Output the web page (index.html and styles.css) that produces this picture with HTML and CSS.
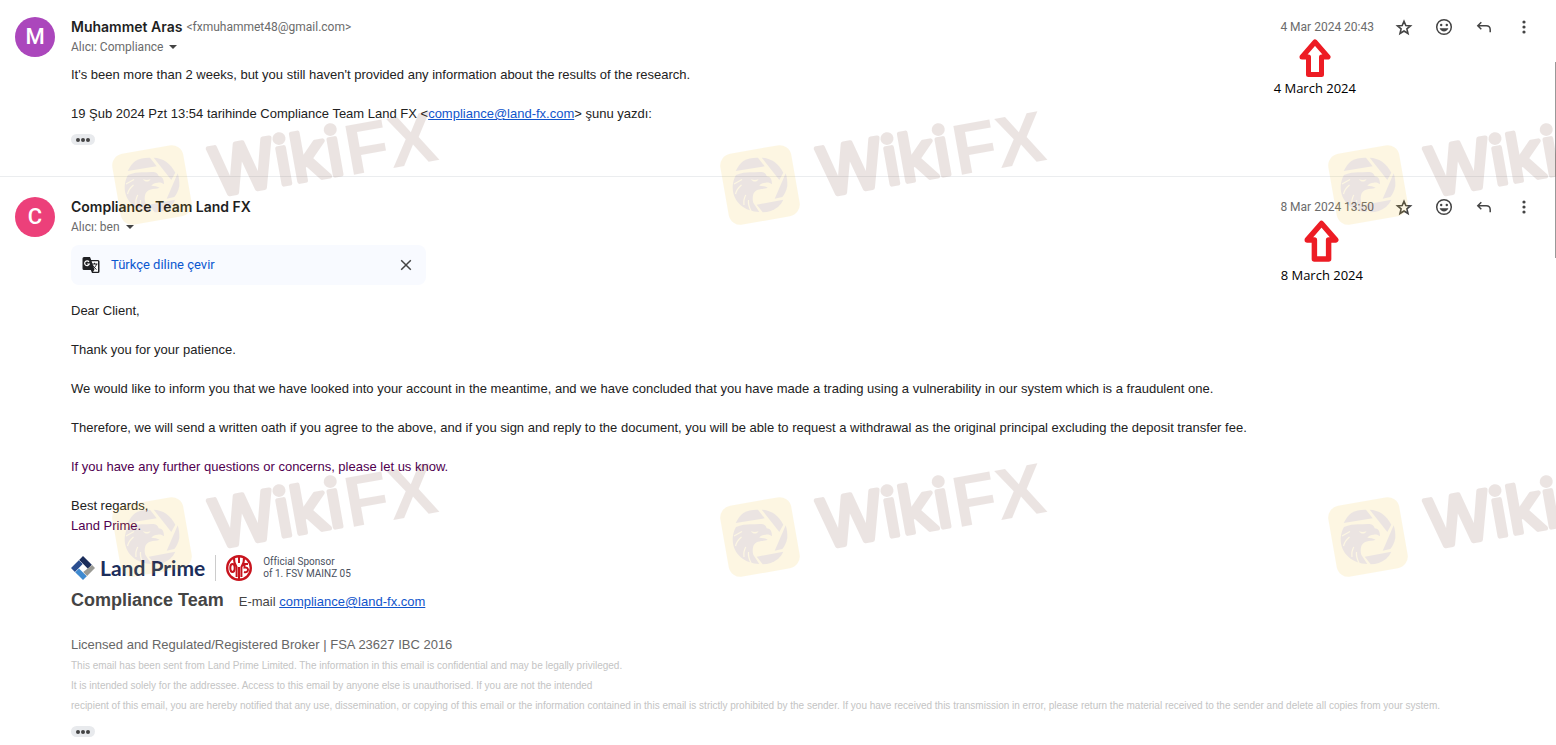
FILE: index.html
```html
<!DOCTYPE html>
<html lang="tr">
<head>
    <meta charset="UTF-8">
    <meta name="viewport" content="width=device-width, initial-scale=1.0">
    <title>Compliance Team Land FX</title>
    <link rel="stylesheet" href="styles.css">
</head>
<body>
    <svg class="defs" width="0" height="0" aria-hidden="true">
        <symbol id="icon-star" viewBox="0 0 20 20">
            <path fill="none" stroke="currentColor" stroke-width="1.600" d="M10 4.200l1.800 4.300 4.700.4-3.600 3 1.100 4.600-4-2.500-4 2.500 1.100-4.600-3.600-3 4.700-.4z"/>
        </symbol>
        <symbol id="icon-smile" viewBox="0 0 20 20">
            <circle cx="10" cy="10" r="7.300" fill="none" stroke="currentColor" stroke-width="1.500"/>
            <circle cx="7.200" cy="8" r="1.200"/>
            <circle cx="12.800" cy="8" r="1.200"/>
            <path d="M5.600 11.300h8.800c-.7 1.900-2.400 3.200-4.400 3.200s-3.700-1.300-4.400-3.200z"/>
        </symbol>
        <symbol id="icon-reply" viewBox="0 0 20 20">
            <path fill="none" stroke="currentColor" stroke-width="1.500" d="M7.300 5.200L3.800 8.700l3.500 3.500M4 8.700h8.200c2.400 0 4 1.600 4 4v2.600"/>
        </symbol>
        <symbol id="icon-more" viewBox="0 0 20 20">
            <circle cx="10" cy="5" r="1.600"/>
            <circle cx="10" cy="10" r="1.600"/>
            <circle cx="10" cy="15" r="1.600"/>
        </symbol>
        <symbol id="icon-arrow" viewBox="0 0 32 38">
            <path fill="#fff" stroke="#ed1c24" stroke-width="5" stroke-linejoin="round" d="M16 3L29 18h-6.500v17.500h-13V18H3z"/>
        </symbol>
        <symbol id="eagle" viewBox="0 0 80 80">
            <rect x="4" y="4" width="72" height="72" rx="12" fill="#f0be1e"/>
            <!-- the bird stays upright inside the tilted tile -->
            <g transform="rotate(10 40 40)">
                <g fill="#642d1e">
                    <path d="M15.700 26C18 21.500 20 18.500 23.300 16c4.500-2.500 9-3.500 14.700-3.300l6.700 8.600z"/>
                    <path d="M41.700 12.700c9 .3 17 5.500 21.600 15l-4 7.300z"/>
                    <path d="M65.700 28.300c1.300 4 1.800 8 1.600 12.700-.8 4.500-2.500 8-5 11l-7.600 1.700z"/>
                    <path d="M36.700 59.700l26.600-5c-1.300 3-3 5-5.300 7.300-4.500 3.500-9.500 5.200-15.300 5.300z"/>
                    <path d="M16 30c5-2 10-2.700 14-2.700s8-.5 11.700-.3c3 .5 4.500 2 5 4.300 3 .5 5.300 1.700 5.300 8-2-1.500-4-2-6.300-1.600-2.400 0-5 1-6.400 3 3 .3 6.400.6 8.400 2-3 1.300-6 .8-9.700 2-2.500 1-4.300 2.500-4.700 4.600-.8 3-.8 5.500 0 8.400l6 9.300C25 66.500 12 57 12.700 41c.3-4.500 1.500-8 3.300-11z"/>
                </g>
                <path fill="#f0be1e" d="M31 34c2.500 1.300 5 1 7.500.3-1.500 3-5.500 3.200-7.500-.3z"/>
                <path fill="none" stroke="#f0be1e" stroke-width="1.200" d="M14 39l8-4.500M15.500 49c1-4 3-6.500 6-9M24 60c-.5-4 0-7 1.800-10M31 66c-2-4-3-7-2.500-11"/>
            </g>
        </symbol>
    </svg>

    <main class="thread">
        <article class="message">
            <div class="avatar avatar-purple">M</div>
            <div class="content">
                <header class="message-header">
                    <div class="sender">
                        <div class="sender-line"><h2 class="name">Muhammet Aras</h2> <span class="address">&lt;fxmuhammet48@gmail.com&gt;</span></div>
                        <button class="recipient" type="button">Alıcı: Compliance <span class="caret"></span></button>
                    </div>
                    <div class="actions">
                        <time class="date">4 Mar 2024 20:43</time>
                        <button class="icon-button" type="button" aria-label="Yıldız ekle"><svg><use href="#icon-star"/></svg></button>
                        <button class="icon-button" type="button" aria-label="Tepki ekle"><svg><use href="#icon-smile"/></svg></button>
                        <button class="icon-button" type="button" aria-label="Yanıtla"><svg><use href="#icon-reply"/></svg></button>
                        <button class="icon-button" type="button" aria-label="Diğer"><svg><use href="#icon-more"/></svg></button>
                        <div class="note note-first"><svg class="note-arrow"><use href="#icon-arrow"/></svg><span>4 March 2024</span></div>
                    </div>
                </header>
                <div class="body">
                    <p>It's been more than 2 weeks, but you still haven't provided any information about the results of the research.</p>
                    <p>19 Şub 2024 Pzt 13:54 tarihinde Compliance Team Land FX &lt;<a href="mailto:compliance@land-fx.com">compliance@land-fx.com</a>&gt; şunu yazdı:</p>
                </div>
                <button class="trimmed" type="button" aria-label="Kırpılan içeriği göster"><i></i><i></i><i></i></button>
            </div>
        </article>

        <article class="message">
            <div class="avatar avatar-pink">C</div>
            <div class="content">
                <header class="message-header">
                    <div class="sender">
                        <div class="sender-line"><h2 class="name">Compliance Team Land FX</h2></div>
                        <button class="recipient" type="button">Alıcı: ben <span class="caret"></span></button>
                    </div>
                    <div class="actions">
                        <time class="date">8 Mar 2024 13:50</time>
                        <button class="icon-button" type="button" aria-label="Yıldız ekle"><svg><use href="#icon-star"/></svg></button>
                        <button class="icon-button" type="button" aria-label="Tepki ekle"><svg><use href="#icon-smile"/></svg></button>
                        <button class="icon-button" type="button" aria-label="Yanıtla"><svg><use href="#icon-reply"/></svg></button>
                        <button class="icon-button" type="button" aria-label="Diğer"><svg><use href="#icon-more"/></svg></button>
                        <div class="note note-second"><svg class="note-arrow"><use href="#icon-arrow"/></svg><span>8 March 2024</span></div>
                    </div>
                </header>
                <div class="translate">
                    <svg class="translate-icon" viewBox="0 0 18 18">
                        <path fill="#202124" d="M2 1h6l1.200 3H16a1.500 1.500 0 0 1 1.500 1.500v10A1.500 1.500 0 0 1 16 17h-6l-1.200-3H2A1.500 1.500 0 0 1 .5 12.500v-10A1.500 1.500 0 0 1 2 1z"/>
                        <path fill="#fff" d="M9.600 5.200H16v10.600h-5l1.500-2z"/>
                        <path fill="none" stroke="#fff" stroke-width="1.200" d="M7 5.800A2.400 2.400 0 1 0 7.300 8H5.200"/>
                        <path fill="none" stroke="#202124" d="M10 8h5.500M12.500 6.800V8M14.500 8c-.5 2-1.500 3.300-3 4.500M11 9.500c.7 1.700 2 3 3.500 4"/>
                    </svg>
                    <button class="translate-link" type="button">Türkçe diline çevir</button>
                    <button class="translate-close" type="button" aria-label="Kapat"><svg viewBox="0 0 12 12"><path fill="none" stroke="currentColor" stroke-width="1.500" d="M1.200 1.200l9.600 9.600M10.800 1.200l-9.600 9.600"/></svg></button>
                </div>
                <div class="body">
                    <p>Dear Client,</p>
                    <p>Thank you for your patience.</p>
                    <p>We would like to inform you that we have looked into your account in the meantime, and we have concluded that you have made a trading using a vulnerability in our system which is a fraudulent one.</p>
                    <p>Therefore, we will send a written oath if you agree to the above, and if you sign and reply to the document, you will be able to request a withdrawal as the original principal excluding the deposit transfer fee.</p>
                    <p class="quoted">If you have any further questions or concerns, please let us know.</p>
                    <p>Best regards,<br><span class="quoted">Land Prime.</span></p>
                </div>
                <footer class="signature">
                    <div class="brand">
                        <svg class="brand-mark" viewBox="0 0 24 24">
                            <path fill="#1b2d5b" d="M12 0l8.800 8.800-3.900 3.900L12 7.800 8.100 3.900z"/>
                            <path fill="#2a4d8f" d="M7.800 4.200l3.900 3.900L7.100 12.700l-3.200 3.200L0 12z"/>
                            <path fill="#3f8ad0" d="M4.200 16.200L8 12.400l7.800 7.800L12 24z"/>
                            <path fill="#9a9a94" d="M21.100 9.100L24 12l-7.900 7.900-3.900-3.900z"/>
                        </svg>
                        <span class="brand-name">Land Prime</span>
                        <svg class="club" viewBox="0 0 26 26">
                            <circle cx="13" cy="13" r="11.800" fill="#fff" stroke="#c8141e" stroke-width="2.400"/>
                            <g fill="none" stroke="#c8141e" stroke-width="2">
                                <ellipse cx="6.500" cy="13" rx="2.200" ry="4"/>
                                <path d="M13 12v13M10.600 22V12C8.500 9 7.800 6 8 2.500M15.400 22V12c2.100-3 2.800-6 2.600-9.500M13 1v7M22 9h-3.500v3.500c2.500-.4 3.500.8 3.500 2.300 0 2-1.800 2.900-4 2.200"/>
                            </g>
                        </svg>
                        <span class="sponsor">Official Sponsor<br>of 1. FSV MAINZ 05</span>
                    </div>
                    <div class="team"><strong class="team-name">Compliance Team</strong><span>E-mail <a href="mailto:compliance@land-fx.com">compliance@land-fx.com</a></span></div>
                    <p class="licence">Licensed and Regulated/Registered Broker | FSA 23627 IBC 2016</p>
                    <div class="disclaimer">
                        <p>This email has been sent from Land Prime Limited. The information in this email is confidential and may be legally privileged.</p>
                        <p>It is intended solely for the addressee. Access to this email by anyone else is unauthorised. If you are not the intended</p>
                        <p>recipient of this email, you are hereby notified that any use, dissemination, or copying of this email or the information contained in this email is strictly prohibited by the sender. If you have received this transmission in error, please return the material received to the sender and delete all copies from your system.</p>
                    </div>
                </footer>
                <button class="trimmed" type="button" aria-label="Kırpılan içeriği göster"><i></i><i></i><i></i></button>
            </div>
        </article>
    </main>

    <div class="scroll-thumb"></div>

    <div class="watermarks" aria-hidden="true">
        <svg class="watermark" viewBox="0 0 340 130"><g transform="rotate(-10 50 80)"><use href="#eagle" x="10" y="40" width="80" height="80"/><text class="mark-wiki" x="110" y="102">Wiki</text><text class="mark-fx" x="246" y="105">FX</text></g></svg>
        <svg class="watermark" viewBox="0 0 340 130"><g transform="rotate(-10 50 80)"><use href="#eagle" x="10" y="40" width="80" height="80"/><text class="mark-wiki" x="110" y="102">Wiki</text><text class="mark-fx" x="246" y="105">FX</text></g></svg>
        <svg class="watermark" viewBox="0 0 340 130"><g transform="rotate(-10 50 80)"><use href="#eagle" x="10" y="40" width="80" height="80"/><text class="mark-wiki" x="110" y="102">Wiki</text><text class="mark-fx" x="246" y="105">FX</text></g></svg>
        <svg class="watermark" viewBox="0 0 340 130"><g transform="rotate(-10 50 80)"><use href="#eagle" x="10" y="40" width="80" height="80"/><text class="mark-wiki" x="110" y="102">Wiki</text><text class="mark-fx" x="246" y="105">FX</text></g></svg>
        <svg class="watermark" viewBox="0 0 340 130"><g transform="rotate(-10 50 80)"><use href="#eagle" x="10" y="40" width="80" height="80"/><text class="mark-wiki" x="110" y="102">Wiki</text><text class="mark-fx" x="246" y="105">FX</text></g></svg>
        <svg class="watermark" viewBox="0 0 340 130"><g transform="rotate(-10 50 80)"><use href="#eagle" x="10" y="40" width="80" height="80"/><text class="mark-wiki" x="110" y="102">Wiki</text><text class="mark-fx" x="246" y="105">FX</text></g></svg>
    </div>
</body>
</html>
```
FILE: styles.css
```css
body {
    position: relative;
    margin: 0;
    background-color: #fff;
    color: #222;
    font-family: "Liberation Sans", Arial, sans-serif;
    font-size: 13px;
    line-height: 20px;
    overflow-x: hidden;
}

h2,
p {
    margin: 0;
}

button {
    padding: 0;
    border: none;
    background: none;
    font: inherit;
    color: inherit;
    cursor: pointer;
}

a {
    color: #1155cc;
}

.defs {
    position: absolute;
}

.message {
    display: flex;
    gap: 16px;
    padding: 17px 12px 0 15px;
}

.message + .message {
    margin-top: 31px;
    border-top: 1px solid #ebedef;
    padding-top: 20px;
}

.avatar {
    flex: none;
    width: 40px;
    height: 40px;
    border-radius: 50%;
    color: #fff;
    font-family: Roboto, sans-serif;
    font-size: 22px;
    font-weight: 500;
    line-height: 40px;
    text-align: center;
}

.avatar-purple {
    background-color: #ab47bc;
}

.avatar-pink {
    background-color: #ec407a;
}

.content {
    flex: 1;
    min-width: 0;
}

.message-header {
    display: flex;
    justify-content: space-between;
    color: #6b6b6b;
    font-family: Roboto, sans-serif;
    font-size: 12px;
}

.sender-line {
    display: flex;
    gap: 4px;
}

.name {
    color: #1f1f1f;
    font-family: Inter, sans-serif;
    font-size: 14px;
    font-weight: 600;
}

.recipient {
    display: flex;
    align-items: center;
    gap: 6px;
}

.caret {
    border: 4px solid transparent;
    border-top-color: #444;
    border-bottom: 0;
}

.actions {
    position: relative;
    display: flex;
    height: 20px;
}

.date {
    margin-right: 10px;
}

.icon-button {
    display: flex;
    align-items: center;
    justify-content: center;
    width: 40px;
    color: #444;
}

.icon-button svg {
    width: 20px;
    height: 20px;
    fill: currentColor;
}

.note {
    position: absolute;
    display: flex;
    flex-direction: column;
    align-items: center;
    gap: 1px;
    color: #000;
    font-family: "Open Sans", sans-serif;
    font-size: 13px;
    white-space: nowrap;
}

.note-first {
    top: 22px;
    right: 188px;
}

.note-second {
    top: 23px;
    right: 181px;
    gap: 3px;
}

.note-arrow {
    width: 32px;
    height: 38px;
}

.note-second .note-arrow {
    width: 35px;
    height: 42px;
}

.body {
    display: flex;
    flex-direction: column;
    gap: 19px;
    margin-top: 8px;
}

.quoted {
    color: #500050;
}

.trimmed {
    display: flex;
    align-items: center;
    justify-content: center;
    gap: 1px;
    width: 24px;
    height: 11px;
    margin-top: 10px;
    border-radius: 6px;
    background-color: #e8eaed;
}

.trimmed i {
    width: 4px;
    height: 4px;
    border-radius: 50%;
    background-color: #444;
}

.translate {
    display: flex;
    align-items: center;
    width: 355px;
    height: 40px;
    margin: 8px 0 16px;
    padding: 0 14px 0 11px;
    border-radius: 8px;
    background-color: #f8faff;
    box-sizing: border-box;
}

.translate-icon {
    width: 18px;
    height: 18px;
    margin-right: 11px;
}

.translate-link {
    color: #0b57d0;
    font-family: Roboto, sans-serif;
}

.translate-close {
    display: flex;
    margin-left: auto;
    color: #444;
}

.translate-close svg {
    width: 12px;
    height: 12px;
}

.signature {
    margin-top: 19px;
}

.brand {
    display: flex;
    align-items: center;
    height: 26px;
}

.brand-mark {
    width: 24px;
    height: 24px;
}

.brand-name {
    margin: 0 10px 0 5px;
    padding-right: 10px;
    border-right: 1px solid #ccc;
    color: #1b2d5b;
    font-family: Lato, sans-serif;
    font-size: 21px;
    font-weight: 700;
    line-height: 26px;
}

.club {
    width: 26px;
    height: 26px;
}

.sponsor {
    margin-left: 11px;
    color: #4a5160;
    font-family: Roboto, sans-serif;
    font-size: 10px;
    line-height: 12px;
}

.team {
    display: flex;
    align-items: baseline;
    gap: 15px;
    margin-top: 9px;
    color: #444;
}

.team-name {
    font-size: 18px;
}

.licence {
    margin-top: 23px;
    color: #666;
}

.disclaimer {
    margin-top: 1px;
    color: #c4c4c4;
    font-size: 10px;
}

/* thin page scrollbar at the right edge */
.scroll-thumb {
    position: absolute;
    top: 62px;
    right: 0;
    width: 1px;
    height: 196px;
    background-color: #999;
}

.watermarks {
    position: absolute;
    inset: 0;
    display: grid;
    grid-template-columns: repeat(3, 608px);
    grid-auto-rows: 352px;
    padding: 105px 0 0 102px;
    overflow: hidden;
    pointer-events: none;
}

.watermark {
    width: 340px;
    height: 130px;
    opacity: 0.12;
    overflow: visible;
}

.mark-wiki,
.mark-fx {
    fill: #642d1e;
}

.mark-wiki {
    font-family: Inter, sans-serif;
    font-size: 66px;
    font-weight: 400;
    stroke: #642d1e;
    stroke-width: 5px;
    stroke-linejoin: round;
}

.mark-fx {
    font-size: 72px;
    font-weight: 700;
}
```
